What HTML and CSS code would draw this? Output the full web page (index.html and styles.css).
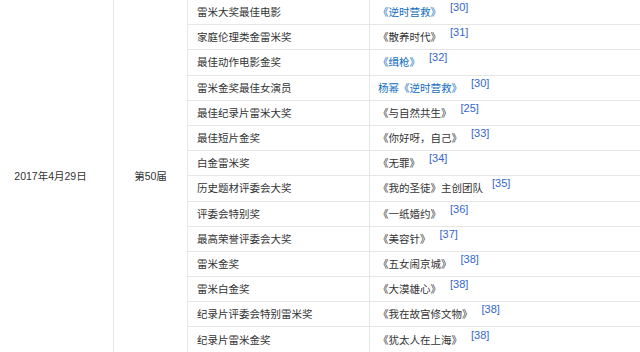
FILE: index.html
```html
<!DOCTYPE html>
<html lang="zh">
<head>
<meta charset="utf-8">
<link rel="stylesheet" href="styles.css">
</head>
<body>
<div class="frame">
<table class="awards">
<colgroup>
<col class="c-date">
<col class="c-session">
<col class="c-award">
<col class="c-work">
</colgroup>
<tbody>
<tr>
<td class="date" rowspan="14">2017年4月29日</td>
<td class="session" rowspan="14">第50届</td>
<td class="award">雷米大奖最佳电影</td>
<td class="work"><a class="link">《逆时营救》</a><sup class="cite">[30]</sup></td>
</tr>
<tr><td class="award">家庭伦理类金雷米奖</td><td class="work">《散养时代》<sup class="cite">[31]</sup></td></tr>
<tr><td class="award">最佳动作电影金奖</td><td class="work"><a class="link">《缉枪》</a><sup class="cite">[32]</sup></td></tr>
<tr><td class="award">雷米金奖最佳女演员</td><td class="work"><a class="link">杨幂</a><a class="link">《逆时营救》</a><sup class="cite">[30]</sup></td></tr>
<tr><td class="award">最佳纪录片雷米大奖</td><td class="work">《与自然共生》<sup class="cite">[25]</sup></td></tr>
<tr><td class="award">最佳短片金奖</td><td class="work">《你好呀，自己》<sup class="cite">[33]</sup></td></tr>
<tr><td class="award">白金雷米奖</td><td class="work">《无罪》<sup class="cite">[34]</sup></td></tr>
<tr><td class="award">历史题材评委会大奖</td><td class="work">《我的圣徒》主创团队<sup class="cite">[35]</sup></td></tr>
<tr><td class="award">评委会特别奖</td><td class="work">《一纸婚约》<sup class="cite">[36]</sup></td></tr>
<tr><td class="award">最高荣誉评委会大奖</td><td class="work">《美容针》<sup class="cite">[37]</sup></td></tr>
<tr><td class="award">雷米金奖</td><td class="work">《五女闹京城》<sup class="cite">[38]</sup></td></tr>
<tr><td class="award">雷米白金奖</td><td class="work">《大漠雄心》<sup class="cite">[38]</sup></td></tr>
<tr><td class="award">纪录片评委会特别雷米奖</td><td class="work">《我在故宫修文物》<sup class="cite">[38]</sup></td></tr>
<tr><td class="award">纪录片雷米金奖</td><td class="work">《犹太人在上海》<sup class="cite">[38]</sup></td></tr>
</tbody>
</table>
</div>
</body>
</html>
```
FILE: styles.css
```css
html, body {
  margin: 0;
  padding: 0;
  background: #ffffff;
}
.frame {
  width: 640px;
  height: 352px;
  overflow: hidden;
}
.awards {
  border-collapse: collapse;
  table-layout: fixed;
  width: 682px;
  margin-left: -13px;
  margin-top: -1px;
  font-family: "Liberation Sans", "Noto Sans CJK SC", sans-serif;
  font-size: 10.5px;
  color: #333333;
}
.c-date { width: 126px; }
.c-session { width: 74px; }
.c-award { width: 182px; }
.c-work { width: 300px; }
.awards td {
  border: 1px solid #e6e6e6;
  height: 24.2px;
  padding: 0 8px;
  line-height: 14px;
  white-space: nowrap;
  vertical-align: middle;
}
.awards td.date,
.awards td.session {
  padding: 0;
  text-align: center;
}
.awards td.award {
  padding-left: 9px;
}
.awards td.work {
  padding-left: 8px;
}
.link {
  color: #136ec2;
  text-decoration: none;
}
.cite {
  color: #3366cc;
  font-size: 11px;
  line-height: 0;
  vertical-align: 5px;
  margin-left: 9px;
}
```
